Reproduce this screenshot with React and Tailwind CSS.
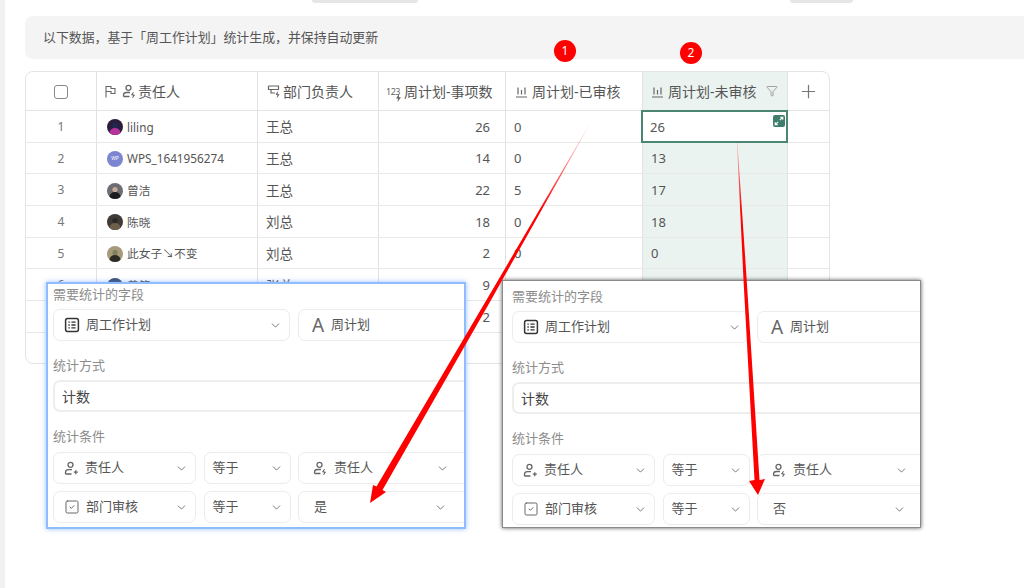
import React from "react";
import { ChevronDown, Plus, Filter, SquareCheck } from "lucide-react";

const FONT = "font-['Noto_Sans','Noto_Sans_CJK_SC',sans-serif]";

const ROWS = [
  { id: 1, name: "liling", boss: "王总", total: 26, done: 0, todo: 26, avatar: "a" },
  { id: 2, name: "WPS_1641956274", boss: "王总", total: 14, done: 0, todo: 13, avatar: "wp" },
  { id: 3, name: "曾洁", boss: "王总", total: 22, done: 5, todo: 17, avatar: "c" },
  { id: 4, name: "陈晓", boss: "刘总", total: 18, done: 0, todo: 18, avatar: "d" },
  { id: 5, name: "此女子↘不变", boss: "刘总", total: 2, done: 0, todo: 0, avatar: "e" },
  { id: 6, name: "黄簌", boss: "张总", total: 9, done: 0, todo: 9, avatar: "f" },
  { id: 7, name: "", boss: "", total: 2, done: 0, todo: 2, avatar: null },
];

// little hand drawn icons
const FlagIcon = () => (
  <svg width="13" height="13" viewBox="0 0 13 13" fill="none" stroke="#666" strokeWidth="1.1">
    <path d="M2 12.5V1.5h5v2h4v5H7V6.5H2" />
  </svg>
);

const PersonBolt = ({ size = 15 }) => (
  <svg width={size} height={size} viewBox="0 0 15 15" fill="none" stroke="#666" strokeWidth="1.3">
    <circle cx="6.5" cy="3.8" r="2.5" />
    <path d="M1.5 12.5v-1.3c0-1.6 1.4-2.7 3-2.7h3.5M1.5 12.5h6" />
    <path d="M11.5 8l-2 3h3l-2 3" fill="#666" strokeWidth="0.8" />
  </svg>
);

const PersonPlus = () => (
  <svg width="15" height="15" viewBox="0 0 15 15" fill="none" stroke="#666" strokeWidth="1.3">
    <circle cx="6.5" cy="3.8" r="2.5" />
    <path d="M1.5 13v-1.6c0-1.6 1.4-2.7 3-2.7h3.5M1.5 13h6" />
    <path d="M9.8 11.2h4M11.8 9.2v4" />
  </svg>
);

const LinkBolt = () => (
  <svg width="15" height="15" viewBox="0 0 15 15" fill="none" stroke="#666" strokeWidth="1.2">
    <path d="M1.5 2h10v3.5H4v3.5h4" />
    <path d="M1.5 2v3.5H4" />
    <path d="M11 7.5l-2 3h3l-2 3" fill="#666" strokeWidth="0.8" />
  </svg>
);

const NumBolt = () => (
  <span className="relative flex items-center w-[17px] text-[9px] text-[#666] leading-none tracking-[-0.5px]">
    123
    <svg className="absolute right-[1px] top-[7px]" width="7" height="8" viewBox="0 0 7 8" fill="#666">
      <path d="M4 0L1 4.5h2L2.5 8 6 3.2H4z" />
    </svg>
  </span>
);

const ChartIcon = () => (
  <svg width="13" height="13" viewBox="0 0 13 13" fill="none" stroke="#666" strokeWidth="1.2">
    <path d="M1 12h11M3 2.5v7M6.5 5v4.5M10 2.5v7" />
  </svg>
);

const TableIcon = () => (
  <svg width="16" height="16" viewBox="0 0 16 16" fill="none" stroke="#333" strokeWidth="1.5">
    <rect x="1.6" y="1.6" width="12.8" height="12.8" rx="2" />
    <path d="M4.4 5.2h1.4M7.4 5.2h4.2M4.4 8h1.4M7.4 8h4.2M4.4 10.8h1.4M7.4 10.8h4.2" strokeWidth="1.3" />
  </svg>
);

const ExpandBadge = () => (
  <div className="absolute right-[1px] top-[3px] w-[12px] h-[12px] rounded-[2px] bg-[#3f7d6c] flex items-center justify-center">
    <svg width="10" height="10" viewBox="0 0 10 10" fill="none" stroke="#fff" strokeWidth="1.1">
      <path d="M5.8 4.2L8.8 1.2M6.2 1.2h2.6v2.6M4.2 5.8L1.2 8.8M1.2 6.2v2.6h2.6" />
    </svg>
  </div>
);

const Avatar = ({ kind }) => {
  if (!kind) return null;
  if (kind === "wp") {
    return (
      <span className="w-4 h-4 rounded-full bg-[#7c86d0] text-white text-[5px] flex items-center justify-center shrink-0">
        WP
      </span>
    );
  }
  const looks = {
    a: ["#2a1d3d", "#b5339a", "#1f2a55"],
    c: ["#6d6d73", "#1c1c20", "#c7a896"],
    d: ["#3f3a36", "#6e5f4a", "#2a2724"],
    e: ["#a89a78", "#2b2a24", "#7d8060"],
    f: ["#3d4e74", "#8896b2", "#26324d"],
  }[kind];
  return (
    <svg className="shrink-0 rounded-full" width="16" height="16" viewBox="0 0 16 16">
      <rect width="16" height="16" fill={looks[0]} />
      <ellipse cx="8" cy="14" rx="5.5" ry="5" fill={looks[1]} />
      <circle cx="8" cy="6.5" r="2.6" fill={looks[2]} />
    </svg>
  );
};

const HeaderCell = ({ className = "", children }) => (
  <div className={`flex items-center pt-[1px] border-r border-[#e2e2e2] text-[14px] text-[#555] ${className}`}>{children}</div>
);

const Cell = ({ className = "", children }) => (
  <div className={`flex items-center pt-[2px] border-r border-[#e2e2e2] text-[13.5px] text-[#555] ${className}`}>{children}</div>
);

const Table = () => (
  <div className="w-[805px] h-[293px] border border-[#e4e4e4] rounded-[8px] overflow-hidden flex flex-col">
    <div className="flex h-[39px] shrink-0 border-b border-[#e4e4e4]">
      <HeaderCell className="w-[71px] justify-center">
        <div className="w-[14px] h-[14px] rounded-[3px] border border-[#888]" />
      </HeaderCell>
      <HeaderCell className="w-[161px] pl-[7px]">
        <FlagIcon />
        <span className="ml-[5px]"><PersonBolt /></span>
        <span className="ml-[1px]">责任人</span>
      </HeaderCell>
      <HeaderCell className="w-[121px] pl-[9px] gap-[1px]">
        <LinkBolt />
        <span>部门负责人</span>
      </HeaderCell>
      <HeaderCell className="w-[127px] pl-[7px] gap-[1px]">
        <NumBolt />
        <span className="whitespace-nowrap">周计划-事项数</span>
      </HeaderCell>
      <HeaderCell className="w-[137px] pl-[9px] gap-[4px]">
        <ChartIcon />
        <span className="whitespace-nowrap">周计划-已审核</span>
      </HeaderCell>
      <HeaderCell className="w-[145px] pl-[8px] gap-[4px] bg-[#ebf3f0] relative">
        <ChartIcon />
        <span className="whitespace-nowrap">周计划-未审核</span>
        <Filter className="absolute right-[9px] top-[13px]" size={12} color="#777" strokeWidth={1.3} />
      </HeaderCell>
      <div className="flex-1 flex items-center justify-center">
        <Plus size={21} color="#777" strokeWidth={1.4} />
      </div>
    </div>

    {ROWS.map((row) => (
      <div key={row.id} className="flex h-[31.7px] shrink-0 border-b border-[#e8e8e8]">
        <Cell className="w-[71px] justify-center !pt-[1px] text-[#777] !text-[12px]">{row.id}</Cell>
        <Cell className="w-[161px] pl-[10px] gap-[4px] !text-[11.75px] whitespace-nowrap">
          <Avatar kind={row.avatar} />
          <span>{row.name}</span>
        </Cell>
        <Cell className="w-[121px] pl-[8px]">{row.boss}</Cell>
        <Cell className="w-[127px] justify-end pr-[15px] !text-[13px]">{row.total}</Cell>
        <Cell className="w-[137px] pl-[8px] !text-[13px]">{row.done}</Cell>
        {row.id === 1 ? (
          <div className="w-[147px] -ml-[2px] -mt-px h-[33px] z-10 relative border-2 border-[#4b8573] bg-white flex items-center pt-[2px] pl-[7px] text-[13px] text-[#555]">
            {row.todo}
            <ExpandBadge />
          </div>
        ) : (
          <Cell className="w-[145px] pl-[8px] bg-[#ebf3f0] !text-[13px]">{row.todo}</Cell>
        )}
      </div>
    ))}
  </div>
);

const Select = ({ className = "", pad = "pl-[10px] pr-[7px]", icon, label, chevron = true }) => (
  <div className={`h-[32px] shrink-0 border border-[#ececec] rounded-[7px] bg-white flex items-center gap-[6px] text-[13px] text-[#555] whitespace-nowrap ${pad} ${className}`}>
    {icon}
    <span className="flex-1">{label}</span>
    {chevron && <ChevronDown size={13} color="#666" strokeWidth={1.6} />}
  </div>
);

const Label = ({ children }) => (
  <div className="h-[20px] flex items-center text-[13px] text-[#8c8c8c]">{children}</div>
);

const FieldIcon = () => <span className="w-[14px] text-center text-[19px] leading-none text-[#666]">A</span>;

const Panel = ({ className, inner, value, w }) => (
  <div className={`absolute overflow-hidden bg-white ${className}`}>
    <div className={`flex flex-col w-[470px] ${inner}`}>
      <Label>需要统计的字段</Label>
      <div className="flex gap-[8px] mt-[4px]">
        <Select className="w-[237px]" icon={<TableIcon />} label="周工作计划" />
        <Select className="w-[200px]" pad="pl-[12px]" icon={<FieldIcon />} label="周计划" chevron={false} />
      </div>
      <div className="mt-[15px]"><Label>统计方式</Label></div>
      <div className="mt-[4px] h-[32px] border-2 border-[#eeeeee] rounded-[7px] flex items-center pl-[7px] text-[14px] text-[#444]">
        计数
      </div>
      <div className="mt-[15px]"><Label>统计条件</Label></div>
      <div className="flex gap-[7.5px] mt-[5px]">
        <Select className={w.first} icon={<PersonPlus />} label="责任人" />
        <Select className="w-[87px]" pad="pl-[8px] pr-[7px]" label="等于" />
        <Select className="w-[200px]" pad={`pl-[14px] ${w.thirdTop}`} icon={<PersonBolt />} label="责任人" />
      </div>
      <div className="flex gap-[7.5px] mt-[7px]">
        <Select className={w.first} icon={<SquareCheck size={16} color="#666" strokeWidth={1.5} />} label="部门审核" />
        <Select className="w-[87px]" pad="pl-[8px] pr-[7px]" label="等于" />
        <Select className="w-[200px]" pad="pl-[10px] pr-[50px]" label={<span className="pl-[5px]">{value}</span>} />
      </div>
    </div>
  </div>
);

// red hand drawn arrows that were put on top of the screenshot
const Arrows = () => (
  <svg className="absolute left-0 top-0 pointer-events-none" width="1024" height="588">
    <defs>
      <linearGradient id="fadeA" gradientUnits="userSpaceOnUse" x1="595" y1="115" x2="540" y2="210">
        <stop offset="0" stopColor="#ff0000" stopOpacity="0" />
        <stop offset="1" stopColor="#ff0000" />
      </linearGradient>
      <linearGradient id="fadeB" gradientUnits="userSpaceOnUse" x1="736" y1="122" x2="741" y2="210">
        <stop offset="0" stopColor="#ff0000" stopOpacity="0" />
        <stop offset="1" stopColor="#ff0000" />
      </linearGradient>
    </defs>
    <polygon
      points="595,115 489.5,302.8 382.5,490 386,492 370,503 373,485 376.5,486.5 486,300.8"
      fill="url(#fadeA)"
    />
    <polygon
      points="736,122 746.7,280 759.5,480 765,479 758,495 749,481 754.5,480 743.5,280"
      fill="url(#fadeB)"
    />
  </svg>
);

const Badge = ({ className, children }) => (
  <div className={`absolute w-[22px] h-[22px] rounded-full bg-[#ff0000] text-white text-[12px] flex items-center justify-center ${className}`}>
    {children}
  </div>
);

export default function App() {
  return (
    <div className={`relative w-[1024px] h-[588px] overflow-hidden bg-white ${FONT}`}>
      <div className="flex h-full">
        <div className="w-[5px] bg-[#f1f1f1] shrink-0" />
        <div className="flex-1 min-w-0 flex flex-col pl-[20px]">
          <div className="h-[3px] mb-[13px] relative">
            <div className="absolute left-[287px] w-[106px] h-[3px] rounded-b-[4px] bg-[#e6e6e6]" />
            <div className="absolute left-[765px] w-[63px] h-[3px] rounded-b-[4px] bg-[#e6e6e6]" />
          </div>
          <div className="h-[43px] bg-[#f4f4f4] rounded-l-[8px] flex items-center pl-[18px] text-[12.9px] text-[#555] mb-[12px]">
            以下数据，基于「周工作计划」统计生成，并保持自动更新
          </div>
          <Table />
        </div>
      </div>

      <Badge className="left-[554px] top-[40px]">1</Badge>
      <Badge className="left-[680px] top-[42px]">2</Badge>

      <Panel
        className="left-[46px] top-[282px] w-[420px] h-[247px] border-2 border-[#8fbcff] shadow-[0_0_5px_rgba(90,150,255,0.6)]"
        inner="pl-[5px] pt-[1px]"
        value="是"
        w={{ first: "w-[143px]", thirdTop: "pr-[48px]" }}
      />
      <Panel
        className="left-[502px] top-[280px] w-[419px] h-[248px] border border-[#8a8a8a] shadow-[0_0_4px_rgba(0,0,0,0.65)]"
        inner="pl-[9px] pt-[6px]"
        value="否"
        w={{ first: "w-[143px]", thirdTop: "pr-[48px]" }}
      />

      <Arrows />
    </div>
  );
}
